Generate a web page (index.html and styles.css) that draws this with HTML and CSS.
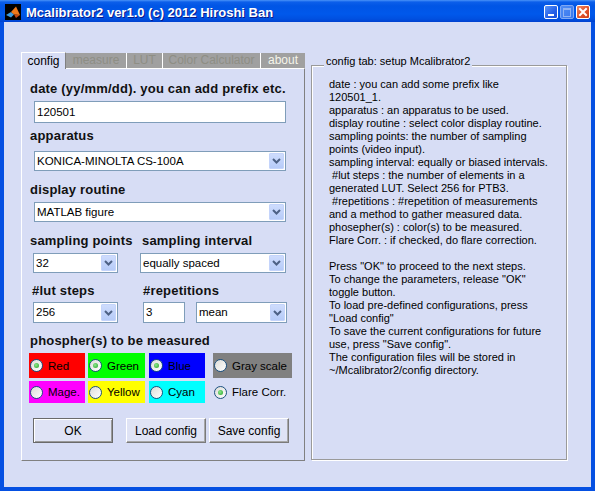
FILE: index.html
```html
<!DOCTYPE html>
<html>
<head>
<meta charset="utf-8">
<title>Mcalibrator2</title>
<link rel="stylesheet" href="styles.css">
</head>
<body>
<div class="window">
  <div class="titlebar">
    <svg class="appicon" width="16" height="16" viewBox="0 0 16 16">
      <rect width="16" height="16" fill="#000"/>
      <path d="M1 11 L6 8 L9 10.5 L6 13.5 Z" fill="#3d9be0"/>
      <path d="M6 8 L11 2.5 L15 11 L9 10.5 Z" fill="#ee7a1c"/>
      <path d="M9 10.5 L15 11 L11 14 Z" fill="#c54812"/>
    </svg>
    <span class="title">Mcalibrator2 ver1.0 (c) 2012 Hiroshi Ban</span>
    <div class="tb-buttons">
      <span class="tbb min"><span class="bar"></span></span>
      <span class="tbb max"><span class="sq"></span></span>
      <span class="tbb close">
        <svg width="12" height="12" viewBox="0 0 12 12"><path d="M3 3 L9 9 M9 3 L3 9" stroke="#fff" stroke-width="2" stroke-linecap="square"/></svg>
      </span>
    </div>
  </div>

  <div class="frame">
    <div class="left">
      <div class="tabs">
        <div class="tab active w-config">config</div>
        <div class="tab w-measure">measure</div>
        <div class="tab sep w-lut">LUT</div>
        <div class="tab sep w-cc">Color Calculator</div>
        <div class="tab sep light w-about">about</div>
      </div>
      <div class="panel">
        <div class="lbl m-date">date (yy/mm/dd). you can add prefix etc.</div>
        <div class="field wide m-input">120501</div>

        <div class="lbl m-app">apparatus</div>
        <div class="combo wide m-sel1"><span class="txt">KONICA-MINOLTA CS-100A</span><span class="arr"><svg width="9" height="6" viewBox="0 0 9 6"><path d="M1 1 L4.5 4.5 L8 1" fill="none" stroke="#4d6185" stroke-width="2"/></svg></span></div>

        <div class="lbl m-disp">display routine</div>
        <div class="combo wide m-sel2"><span class="txt">MATLAB figure</span><span class="arr"><svg width="9" height="6" viewBox="0 0 9 6"><path d="M1 1 L4.5 4.5 L8 1" fill="none" stroke="#4d6185" stroke-width="2"/></svg></span></div>

        <div class="row m-lblrow1">
          <div class="lbl sp-a">sampling points</div>
          <div class="lbl">sampling interval</div>
        </div>
        <div class="row m-ctlrow1">
          <div class="combo sp-c1"><span class="txt">32</span><span class="arr"><svg width="9" height="6" viewBox="0 0 9 6"><path d="M1 1 L4.5 4.5 L8 1" fill="none" stroke="#4d6185" stroke-width="2"/></svg></span></div>
          <div class="combo sp-c2"><span class="txt">equally spaced</span><span class="arr"><svg width="9" height="6" viewBox="0 0 9 6"><path d="M1 1 L4.5 4.5 L8 1" fill="none" stroke="#4d6185" stroke-width="2"/></svg></span></div>
        </div>

        <div class="row m-lblrow2">
          <div class="lbl lut-a">#lut steps</div>
          <div class="lbl">#repetitions</div>
        </div>
        <div class="row m-ctlrow2">
          <div class="combo tall lut-c1"><span class="txt">256</span><span class="arr"><svg width="9" height="6" viewBox="0 0 9 6"><path d="M1 1 L4.5 4.5 L8 1" fill="none" stroke="#4d6185" stroke-width="2"/></svg></span></div>
          <div class="field small lut-c2">3</div>
          <div class="combo tall lut-c3"><span class="txt">mean</span><span class="arr"><svg width="9" height="6" viewBox="0 0 9 6"><path d="M1 1 L4.5 4.5 L8 1" fill="none" stroke="#4d6185" stroke-width="2"/></svg></span></div>
        </div>

        <div class="lbl m-phos">phospher(s) to be measured</div>
        <div class="row m-sw1">
          <div class="swatch red c1"><span class="radio on"></span>Red</div>
          <div class="swatch green c2"><span class="radio on"></span>Green</div>
          <div class="swatch blue c3"><span class="radio on"></span>Blue</div>
          <div class="swatch gray c4"><span class="radio"></span>Gray scale</div>
        </div>
        <div class="row m-sw2">
          <div class="swatch magenta c1 short"><span class="radio"></span>Mage.</div>
          <div class="swatch yellow c2 short"><span class="radio"></span>Yellow</div>
          <div class="swatch cyan c3 short"><span class="radio"></span>Cyan</div>
          <div class="swatch plain c4 short"><span class="radio on"></span>Flare Corr.</div>
        </div>

        <div class="row m-btns">
          <div class="btn ok b1">OK</div>
          <div class="btn b2">Load config</div>
          <div class="btn b3">Save config</div>
        </div>
      </div>
    </div>

    <div class="group">
      <div class="group-label">config tab: setup Mcalibrator2</div>
      <div class="help">
        <div>date : you can add some prefix like</div>
        <div>120501_1.</div>
        <div>apparatus : an apparatus to be used.</div>
        <div>display routine : select color display routine.</div>
        <div>sampling points: the number of sampling</div>
        <div>points (video input).</div>
        <div>sampling interval: equally or biased intervals.</div>
        <div> #lut steps : the number of elements in a</div>
        <div>generated LUT. Select 256 for PTB3.</div>
        <div> #repetitions : #repetition of measurements</div>
        <div>and a method to gather measured data.</div>
        <div>phosepher(s) : color(s) to be measured.</div>
        <div>Flare Corr. : if checked, do flare correction.</div>
        <div></div>
        <div>Press "OK" to proceed to the next steps.</div>
        <div>To change the parameters, release "OK"</div>
        <div>toggle button.</div>
        <div>To load pre-defined configurations, press</div>
        <div>"Load config"</div>
        <div>To save the current configurations for future</div>
        <div>use, press "Save config".</div>
        <div>The configuration files will be stored in</div>
        <div>~/Mcalibrator2/config directory.</div>
      </div>
    </div>
  </div>
</div>
</body>
</html>
```

FILE: styles.css
```css
html, body {
  margin: 0;
  padding: 0;
}
body {
  background: #d7ddf5;
  font-family: "Liberation Sans", Arial, sans-serif;
  color: #000;
}
.window {
  width: 595px;
  height: 491px;
  display: flex;
  flex-direction: column;
  overflow: hidden;
}

/* title bar */
.titlebar {
  box-sizing: border-box;
  height: 22px;
  flex: none;
  display: flex;
  align-items: center;
  padding: 0 5px;
  background: linear-gradient(#4a93f8 0px, #0c5fea 2px, #0055e5 6px, #0058eb 14px, #0050e0 19px, #0040cf 22px);
}
.appicon {
  flex: none;
  margin-top: 1px;
  margin-right: 5px;
}
.title {
  margin-top: 3px;
  color: #fff;
  font-weight: bold;
  font-size: 13px;
  white-space: nowrap;
  text-shadow: 1px 1px 0 #0a1a8a;
}
.tb-buttons {
  margin-left: auto;
  margin-top: 2px;
  display: flex;
  gap: 2px;
}
.tbb {
  box-sizing: border-box;
  width: 14px;
  height: 14px;
  border: 1px solid #fff;
  border-radius: 2px;
  position: relative;
  display: flex;
  align-items: center;
  justify-content: center;
}
.tbb.min {
  background: linear-gradient(135deg, #5a95f7, #2460e8 60%, #1a50d8);
}
.tbb.min .bar {
  position: absolute;
  left: 3px;
  bottom: 2px;
  width: 6px;
  height: 2px;
  background: #fff;
}
.tbb.max {
  border-color: #7fa8f4;
  background: linear-gradient(135deg, #4f8cf4, #3a78ee);
}
.tbb.max .sq {
  width: 6px;
  height: 6px;
  border: 1px solid #8fb2f3;
  border-top-width: 2px;
}
.tbb.close {
  background: linear-gradient(135deg, #f08a62, #e0522a 55%, #cc3e18);
}

/* frame */
.frame {
  flex: 1;
  display: flex;
  align-items: flex-start;
  gap: 6px;
  padding: 30px 0 0 17px;
  border: 4px solid #0550e2;
  border-top: 0;
  background: #d7ddf5;
}

/* left tabbed panel */
.left {
  width: 284px;
  flex: none;
}
.tabs {
  display: flex;
  align-items: flex-end;
  height: 16px;
}
.tab {
  box-sizing: border-box;
  height: 15px;
  font-size: 12px;
  line-height: 15px;
  text-align: center;
  white-space: nowrap;
  overflow: hidden;
  background: #a0a0a0;
  color: #8e8e85;
}
.tab.sep {
  border-left: 1px solid #fff;
}
.tab.light {
  color: #f5f5ea;
}
.tab.active {
  height: 17px;
  line-height: 16px;
  margin-bottom: -1px;
  background: #d7ddf5;
  color: #000;
  border-top: 1px solid #fff;
  border-left: 1px solid #fff;
  border-right: 1px solid #808080;
  position: relative;
  z-index: 1;
}
.w-config { width: 45px; }
.w-measure { width: 60px; }
.w-lut { width: 36px; }
.w-cc { width: 98px; }
.w-about { width: 45px; }

.panel {
  box-sizing: border-box;
  height: 393px;
  border-top: 1px solid #fff;
  border-left: 1px solid #fff;
  border-right: 1px solid #808080;
  border-bottom: 1px solid #808080;
}

.lbl {
  font-weight: bold;
  font-size: 13px;
  line-height: 14px;
  height: 14px;
  letter-spacing: 0.2px;
  white-space: nowrap;
  color: #111;
  margin-left: 8px;
}
.row {
  display: flex;
}
.row .lbl {
  margin-left: 0;
}

.field {
  box-sizing: border-box;
  height: 22px;
  border: 1px solid #7f9db9;
  background: #fff;
  font-size: 11.5px;
  line-height: 20px;
  padding-left: 2px;
  white-space: nowrap;
}
.combo {
  box-sizing: border-box;
  height: 20px;
  border: 1px solid #7f9db9;
  background: #fff;
  display: flex;
  font-size: 11.5px;
}
.combo.tall {
  height: 21px;
}
.combo .txt {
  flex: 1;
  padding-left: 2px;
  line-height: 18px;
  white-space: nowrap;
  overflow: hidden;
}
.combo.tall .txt {
  line-height: 19px;
}
.combo .arr {
  box-sizing: border-box;
  flex: none;
  width: 15px;
  margin: 1px;
  border: 1px solid #c4d4fb;
  border-radius: 1px;
  background: linear-gradient(#cedcfd, #b6cbf8);
  display: flex;
  align-items: center;
  justify-content: center;
}
.wide {
  width: 252px;
  margin-left: 12px;
}

/* vertical rhythm */
.m-date { margin-top: 13px; }
.m-input { margin-top: 5px; }
.m-app { margin-top: 6px; }
.m-sel1 { margin-top: 8px; }
.m-disp { margin-top: 12px; }
.m-sel2 { margin-top: 5px; }
.m-lblrow1 { margin-top: 12px; }
.m-ctlrow1 { margin-top: 5px; }
.m-lblrow2 { margin-top: 11px; }
.m-ctlrow2 { margin-top: 4px; }
.m-phos { margin-top: 11px; }
.m-sw1 { margin-top: 5px; }
.m-sw2 { margin-top: 3px; }
.m-btns { margin-top: 15px; }

/* horizontal placement */
.sp-a { margin-left: 8px !important; width: 112px; }
.sp-c1 { margin-left: 11px; width: 85px; }
.sp-c2 { margin-left: 22px; width: 146px; }
.lut-a { margin-left: 10px !important; width: 111px; }
.lut-c1 { margin-left: 11px; width: 85px; }
.lut-c2 { margin-left: 25px; width: 42px; height: 21px; line-height: 19px; }
.lut-c3 { margin-left: 11px; width: 91px; }

/* colour swatches with radios */
.swatch {
  box-sizing: border-box;
  height: 25px;
  display: flex;
  align-items: center;
  padding-left: 1px;
  font-size: 11.5px;
  white-space: nowrap;
  color: #000;
}
.swatch.short { height: 22px; }
.c1 { margin-left: 7px; width: 56px; }
.c2 { margin-left: 3px; width: 57px; }
.c3 { margin-left: 4px; width: 56px; }
.c4 { margin-left: 8px; width: 79px; }
.red { background: #ff0000; }
.green { background: #00ff00; }
.blue { background: #0000ff; }
.gray { background: #808080; }
.magenta { background: #ff00ff; }
.yellow { background: #ffff00; }
.cyan { background: #00ffff; }
.plain { background: transparent; }

.radio {
  box-sizing: border-box;
  flex: none;
  width: 13px;
  height: 13px;
  margin-right: 5px;
  border-radius: 50%;
  border: 1px solid #1c5180;
  background: linear-gradient(135deg, #dcdcd7, #ffffff);
  display: flex;
  align-items: center;
  justify-content: center;
}
.radio.on::after {
  content: "";
  width: 5px;
  height: 5px;
  border-radius: 50%;
  background: radial-gradient(circle at 40% 40%, #8ee88e, #21a121);
}

/* push buttons */
.btn {
  box-sizing: border-box;
  width: 80px;
  height: 25px;
  font-size: 12px;
  display: flex;
  align-items: center;
  justify-content: center;
  background: #dfe3f5;
  border: 1px solid;
  border-color: #ffffff #7a7a7a #7a7a7a #ffffff;
  box-shadow: inset -1px -1px 0 #a8a8a8;
  white-space: nowrap;
}
.btn.ok {
  border: 1px solid #6a6a6a;
  box-shadow: inset 1px 1px 0 #ffffff, inset -1px -1px 0 #9a9a9a;
}
.b1 { margin-left: 11px; }
.b2 { margin-left: 13px; }
.b3 { margin-left: 3px; }

/* right group box */
.group {
  position: relative;
  box-sizing: border-box;
  width: 256px;
  height: 395px;
  margin-top: 13px;
  border: 1px solid #9a9a9a;
  box-shadow: inset 1px 1px 0 #fff, 1px 1px 0 #fff;
  padding: 12px 0 0 17px;
}
.group-label {
  position: absolute;
  top: -11px;
  left: 12px;
  padding: 0 2px;
  background: #d7ddf5;
  font-size: 11px;
  line-height: 13px;
  white-space: nowrap;
}
.help {
  font-size: 11px;
  line-height: 13px;
}
.help div {
  height: 13px;
  white-space: pre;
}
```
